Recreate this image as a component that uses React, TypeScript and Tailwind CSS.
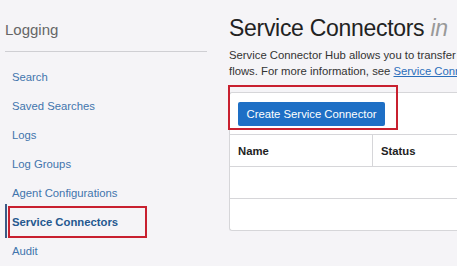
import React from "react";

const navItems = [
  "Search",
  "Saved Searches",
  "Logs",
  "Log Groups",
  "Agent Configurations",
  "Service Connectors",
  "Audit",
];

export default function App() {
  return (
    <div
      className="flex w-[457px] h-[266px] overflow-hidden bg-[#f5f4f7]"
      style={{ fontFamily: '"Liberation Sans", Arial, sans-serif' }}
    >
      <aside className="w-[229px] shrink-0 pl-[5px] pr-[22px]">
        <div className="mt-[21px] text-[15px] leading-[18px] text-[#666]">Logging</div>
        <div className="mt-[12px] border-b border-[#cfcfd3]" />
        <nav className="pt-[11px] flex flex-col">
          {navItems.map((item) => {
            const active = item === "Service Connectors";
            return (
              <div key={item} className="relative h-[29px] flex items-center pl-[7px]">
                {active && (
                  <>
                    <div className="absolute left-0 top-[-4px] w-[2px] h-[34px] bg-[#3b5b86]" />
                    <div className="absolute left-[3px] top-[-2px] w-[139px] h-[32px] border-2 border-[#c8202f]" />
                  </>
                )}
                <span
                  className={
                    "text-[11.3px] " +
                    (active ? "font-bold text-[#25588f]" : "text-[#4274ad]")
                  }
                >
                  {item}
                </span>
              </div>
            );
          })}
        </nav>
      </aside>
      <main className="flex-1 min-w-0 pt-[14px]">
        <h1 className="text-[23px] leading-[28px] tracking-[-0.3px] text-[#222] whitespace-nowrap">
          Service Connectors <span className="italic text-[#999]">in</span>
        </h1>
        <p className="mt-[5px] text-[11.3px] leading-[16px] text-[#333] whitespace-nowrap">
          Service Connector Hub allows you to transfer data between services in Oracle Cloud
          <br />
          flows. For more information, see{" "}
          <span className="text-[#2a6ebb] underline">Service Connector Hub</span>
        </p>
        <div className="relative mt-[13px] w-[260px]">
          <div className="border border-r-0 border-[#d6d6d9] rounded-l-[3px] bg-white">
            <div className="px-[8px] py-[8px] border-b border-[#d6d6d9]">
              <button className="h-[24px] w-[147px] rounded-[2px] bg-[#1e6fc5] text-white text-[11.3px]">
                Create Service Connector
              </button>
            </div>
            <div className="grid grid-cols-[143px_1fr] h-[32px] border-b border-[#d6d6d9]">
              <div className="flex items-center pl-[8px] border-r border-[#d6d6d9] text-[11.3px] font-bold text-[#222]">
                Name
              </div>
              <div className="flex items-center pl-[8px] text-[11.3px] font-bold text-[#222]">
                Status
              </div>
            </div>
            <div className="h-[32px] border-b border-[#d6d6d9]" />
            <div className="h-[31px]" />
          </div>
          <div className="absolute left-[-1px] top-[-7px] w-[170px] h-[45px] border-2 border-[#c8202f]" />
        </div>
      </main>
    </div>
  );
}
